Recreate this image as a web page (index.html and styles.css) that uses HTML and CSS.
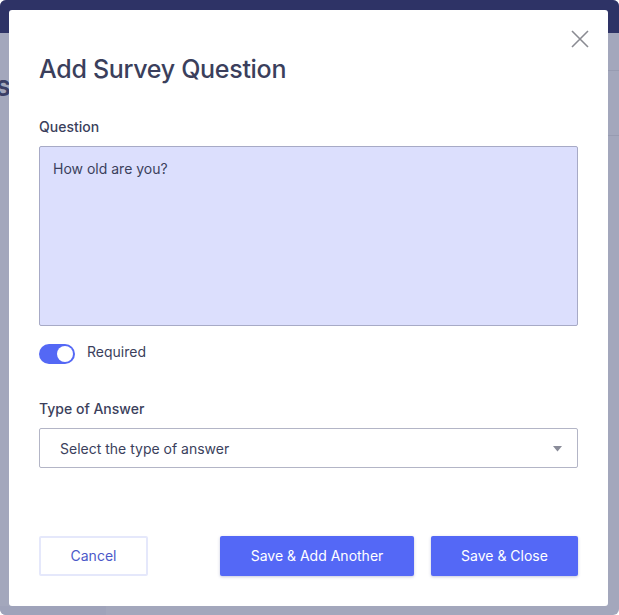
FILE: index.html
```html
<!DOCTYPE html>
<html>
<head>
<meta charset="utf-8">
<link rel="stylesheet" href="styles.css">
</head>
<body>
<div class="page">
  <div class="app-header"></div>
  <div class="app-body">
    <div class="app-title">S</div>
    <div class="app-rule rule-1"></div>
    <div class="app-rule rule-2"></div>
  </div>
  <div class="corner-shade"></div>

  <div class="modal">
    <button class="close" aria-label="Close">
      <svg width="18" height="18" viewBox="0 0 18 18"><path d="M1 1 L17 17 M17 1 L1 17" stroke="#8a8b92" stroke-width="1.6" fill="none"/></svg>
    </button>
    <h1 class="modal-title">Add Survey Question</h1>

    <div class="field field-question">
      <label class="label">Question</label>
      <div class="textarea">How old are you?</div>
    </div>

    <div class="toggle-row">
      <span class="toggle"><span class="knob"></span></span>
      <span class="toggle-label">Required</span>
    </div>

    <div class="field field-type">
      <label class="label">Type of Answer</label>
      <div class="select">
        <span>Select the type of answer</span>
        <svg class="caret" width="9" height="6" viewBox="0 0 9 6"><path d="M0 0 H9 L4.5 5.5 Z" fill="#8a8c99"/></svg>
      </div>
    </div>

    <div class="actions">
      <button class="btn btn-cancel">Cancel</button>
      <div class="actions-right">
        <button class="btn btn-primary btn-another">Save &amp; Add Another</button>
        <button class="btn btn-primary btn-close">Save &amp; Close</button>
      </div>
    </div>
  </div>
</div>
</body>
</html>
```

FILE: styles.css
```css
* { box-sizing: border-box; }
html, body { margin: 0; padding: 0; background: #ffffff; }
body { font-family: Inter, "Noto Sans", "Liberation Sans", sans-serif; }

.page {
  position: relative;
  width: 619px;
  height: 615px;
  overflow: hidden;
  border-radius: 6px;
  background: #a3a7bc;
}
.app-header {
  height: 33px;
  background: #2e3366;
}
.app-body {
  position: relative;
  height: 582px;
}
.app-title {
  padding: 44px 0 0 0;
  margin-left: -4px;
  font-size: 22px;
  font-weight: 700;
  color: #3a3e66;
  line-height: 22px;
}
.app-rule {
  position: absolute;
  right: 0;
  width: 40px;
  height: 1px;
  background: #979bb1;
}
.rule-1 { top: 37px; }
.rule-2 { top: 102px; }
.corner-shade {
  position: absolute;
  left: 0;
  bottom: 0;
  width: 106px;
  height: 9px;
  background: #9fa3ba;
}

.modal {
  position: absolute;
  left: 9px;
  top: 10px;
  width: 599px;
  height: 596px;
  background: #ffffff;
  border-radius: 3px;
  padding: 0 30px;
  display: flex;
  flex-direction: column;
  color: #3b3f5c;
}
.close {
  position: absolute;
  top: 20px;
  right: 19px;
  width: 18px;
  height: 18px;
  padding: 0;
  border: 0;
  background: transparent;
  display: flex;
}
.modal-title {
  margin: 45px 0 0 0;
  font-size: 25px;
  line-height: 28px;
  font-weight: 500;
  letter-spacing: -0.3px;
  color: #3b3f5c;
}
.field { display: flex; flex-direction: column; }
.field-question { margin-top: 35px; }
.label {
  font-size: 14px;
  line-height: 18px;
  font-weight: 500;
  color: #3b3f5c;
}
.textarea {
  margin-top: 10px;
  height: 180px;
  background: #dcdffd;
  border: 1px solid #a7aac6;
  border-radius: 2px;
  padding: 13px 13px;
  font-size: 14px;
  line-height: 18px;
  color: #3b3f5c;
}
.toggle-row {
  margin-top: 18px;
  display: flex;
  align-items: center;
  gap: 12px;
}
.toggle {
  width: 36px;
  height: 20px;
  border-radius: 10px;
  background: #5468f5;
  display: flex;
  align-items: center;
  justify-content: flex-end;
  padding: 2px;
}
.knob {
  width: 16px;
  height: 16px;
  border-radius: 50%;
  background: #ffffff;
}
.toggle-label {
  font-size: 14px;
  line-height: 18px;
  color: #3b3f5c;
  margin-top: -4px;
}
.field-type { margin-top: 36px; }
.select {
  margin-top: 10px;
  height: 40px;
  border: 1px solid #b3b5c6;
  border-radius: 2px;
  padding: 0 15px 0 20px;
  display: flex;
  align-items: center;
  justify-content: space-between;
  font-size: 14px;
  color: #3b3f5c;
}
.caret { margin-top: 1px; }

.actions {
  margin-top: 68px;
  display: flex;
  justify-content: space-between;
  align-items: center;
}
.actions-right { display: flex; gap: 17px; }
.btn {
  height: 40px;
  font-family: Inter, "Noto Sans", "Liberation Sans", sans-serif;
  font-size: 14px;
  border-radius: 2px;
  cursor: pointer;
  padding: 0 0 2px 0;
}
.btn-cancel {
  width: 109px;
  background: #ffffff;
  border: 2px solid #e5e8fb;
  color: #4c59c9;
  padding-bottom: 1px;
}
.btn-primary {
  background: #5468f6;
  border: 0;
  color: #ffffff;
  box-shadow: 0 1px 3px rgba(60, 70, 140, 0.3);
}
.btn-another { width: 194px; }
.btn-close { width: 147px; }
```
